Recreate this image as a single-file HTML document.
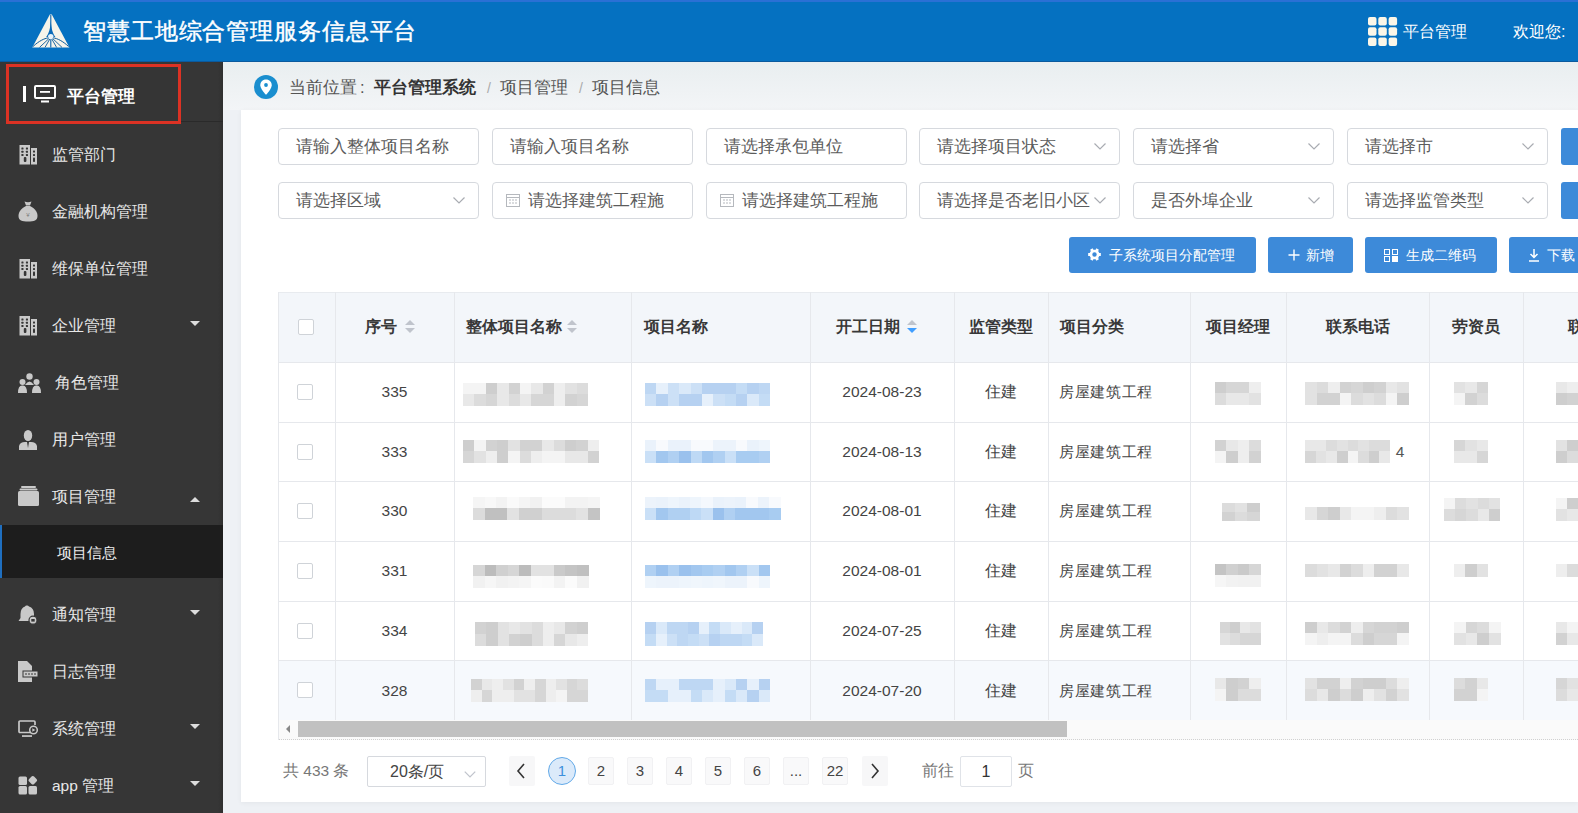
<!DOCTYPE html><html><head><meta charset="utf-8"><style>
*{box-sizing:border-box;margin:0;padding:0}
html,body{width:1578px;height:813px;overflow:hidden}
body{position:relative;background:#eef1f5;font-family:"Liberation Sans",sans-serif;color:#333}
.abs{position:absolute}
.hdr{left:0;top:0;width:1578px;height:62px;background:#0571c1;border-top:2px solid #2a70d5;border-bottom:1px solid #0b5a9e}
.title{left:83px;top:14px;font-size:23px;letter-spacing:0.88px;-webkit-text-stroke:0.45px #fff;color:#fff;line-height:34px;white-space:nowrap}
.side{left:0;top:62px;width:223px;height:751px;background:#363636}
.mi{position:absolute;left:0;width:223px;height:40px;color:#e8e8e8;font-size:15.5px;line-height:40px;white-space:nowrap}
.mi .t{position:absolute;left:52px;top:0}
.mi svg{position:absolute}
.car{position:absolute;left:189.5px;top:15px;width:0;height:0;border-left:5px solid transparent;border-right:5px solid transparent;border-top:5px solid #ddd}
.car.up{border-top:0;border-bottom:5px solid #ddd;top:20px}
.crumb{left:223px;top:62px;width:1355px;height:48px;background:linear-gradient(#e9eef0,#f3f5f7)}
.card{left:241px;top:110px;width:1337px;height:692px;background:#fff;box-shadow:0 1px 5px rgba(0,0,0,0.05)}
.inp{position:absolute;height:37px;width:201px;border:1px solid #d6d9de;border-radius:4px;background:#fff;font-size:16.5px;color:#5c5c5c;line-height:35px;padding-left:17px;white-space:nowrap;overflow:hidden}
.chev{position:absolute;right:13px;top:14px;width:12px;height:7px}
.btn{position:absolute;top:237px;height:36px;background:#3d8ad9;border-radius:3px;color:#fff;font-size:14.4px;line-height:36px;white-space:nowrap;overflow:hidden}
.th{position:absolute;top:292px;height:70px;font-size:15.5px;font-weight:bold;color:#383838;line-height:70px;white-space:nowrap}
.td{position:absolute;height:60px;font-size:15.5px;color:#444;line-height:60px;white-space:nowrap;text-align:center}
.vl{position:absolute;width:1px;background:#e6e8ec}
.hl{position:absolute;height:1px;background:#e6e8ec}
.cb{position:absolute;width:16px;height:16px;border:1px solid #cfd3d8;border-radius:2px;background:#fff}
.sort{position:absolute;width:10px;height:14px}
.sort:before{content:"";position:absolute;left:0;top:0;border-left:5px solid transparent;border-right:5px solid transparent;border-bottom:5px solid #c0c4cc}
.sort:after{content:"";position:absolute;left:0;top:8px;border-left:5px solid transparent;border-right:5px solid transparent;border-top:5px solid #c0c4cc}
.sort.desc:after{border-top-color:#409eff}
.pg{position:absolute;top:757px;height:28px;font-size:15px;line-height:28px;color:#444;text-align:center}
.mos{position:absolute}
.mos i{position:absolute;display:block}
</style></head><body>
<div class="abs hdr"></div>
<svg class="abs" style="left:30px;top:12px" width="42" height="38" viewBox="0 0 42 38">
<path d="M19.8 2.6 L2.3 35.4 L39.4 35.4 L21.8 2.6 Z" fill="#f6f4ea"/>
<path d="M20.8 3 L20.8 35.4" stroke="#0a64ad" stroke-width="1.1"/>
<path d="M20.8 9 C20.2 17 19 21 16.2 25 L25.4 25 C22.6 21 21.4 17 20.8 9 Z" fill="#0a6bb8"/>
<circle cx="20.8" cy="24.6" r="2.7" fill="#e6f2fa"/>
<path d="M3 34.5 C9 29 14 26.5 18.5 25.8 M38.6 34.5 C32.6 29 27.6 26.5 23.1 25.8" stroke="#0a5a9a" stroke-width="1" fill="none"/>
<path d="M19 26.5 L9.5 35.4 M19.8 27 L15 35.4 M21.8 27 L26.6 35.4 M22.6 26.5 L32 35.4" stroke="#0a5a9a" stroke-width="0.9" fill="none"/>
</svg>
<div class="abs title">智慧工地综合管理服务信息平台</div>
<svg class="abs" style="left:1368px;top:17px" width="30" height="30" viewBox="0 0 30 30"><rect x="0.0" y="0.0" width="8.5" height="8.5" rx="2" fill="#fbf6e8"/><rect x="10.3" y="0.0" width="8.5" height="8.5" rx="2" fill="#fbf6e8"/><rect x="20.6" y="0.0" width="8.5" height="8.5" rx="2" fill="#fbf6e8"/><rect x="0.0" y="10.3" width="8.5" height="8.5" rx="2" fill="#fbf6e8"/><rect x="10.3" y="10.3" width="8.5" height="8.5" rx="2" fill="#fbf6e8"/><rect x="20.6" y="10.3" width="8.5" height="8.5" rx="2" fill="#fbf6e8"/><rect x="0.0" y="20.6" width="8.5" height="8.5" rx="2" fill="#fbf6e8"/><rect x="10.3" y="20.6" width="8.5" height="8.5" rx="2" fill="#fbf6e8"/><rect x="20.6" y="20.6" width="8.5" height="8.5" rx="2" fill="#fbf6e8"/></svg>
<div class="abs" style="left:1403px;top:19px;font-size:15.6px;line-height:26px;color:#fff;white-space:nowrap">平台管理</div>
<div class="abs" style="left:1513px;top:19px;font-size:16px;line-height:26px;color:#fff;white-space:nowrap">欢迎您:</div>
<div class="abs side"></div>
<div class="abs" style="left:218px;top:62px;width:5px;height:751px;background:linear-gradient(90deg,rgba(0,0,0,0),rgba(0,0,0,0.12))"></div>
<div class="abs" style="left:181px;top:121px;width:42px;height:1px;background:#2a2a2a"></div>
<div class="abs" style="left:6px;top:64px;width:175px;height:60px;border:3.5px solid #dc3224;background:#353535"></div>
<div class="abs" style="left:23px;top:86px;width:2.5px;height:16px;background:#fff"></div>
<svg class="abs" style="left:34px;top:85px" width="22" height="18" viewBox="0 0 22 18"><rect x="1" y="1" width="20" height="12" rx="1" fill="none" stroke="#fff" stroke-width="2"/><rect x="6" y="6" width="10" height="1.8" fill="#fff"/><rect x="7" y="15.5" width="8" height="2" fill="#fff"/></svg>
<div class="abs" style="left:67px;top:85px;font-size:17px;font-weight:bold;color:#fff;line-height:24px;white-space:nowrap">平台管理</div>
<div class="abs" style="left:0;top:525px;width:223px;height:53px;background:#1d1d1d"></div>
<div class="abs" style="left:0;top:525px;width:2px;height:53px;background:#1f6fc0"></div>
<div class="abs" style="left:57px;top:541px;font-size:15.2px;line-height:24px;color:#eee;white-space:nowrap">项目信息</div>
<div class="mi" style="top:135px"><span class="t" style="left:52px">监管部门</span><svg class="abs" style="left:19px;top:10px" width="19" height="20" viewBox="0 0 19 20"><rect x="0.5" y="0" width="10.5" height="19.5" fill="#c9c9c9"/><rect x="12" y="3" width="6" height="16.5" fill="#c9c9c9"/><rect x="2.4" y="2.4" width="2.1" height="2.1" rx="0.5" fill="#363636"/><rect x="2.4" y="5.7" width="2.1" height="2.1" rx="0.5" fill="#363636"/><rect x="2.4" y="9" width="2.1" height="2.1" rx="0.5" fill="#363636"/><rect x="6.9" y="2.4" width="2.1" height="2.1" rx="0.5" fill="#363636"/><rect x="6.9" y="5.7" width="2.1" height="2.1" rx="0.5" fill="#363636"/><rect x="6.9" y="9" width="2.1" height="2.1" rx="0.5" fill="#363636"/><rect x="14" y="5.5" width="2" height="2" rx="0.5" fill="#363636"/><rect x="14" y="9" width="2" height="2" rx="0.5" fill="#363636"/><rect x="4.8" y="12" width="2.6" height="5" rx="1" fill="#363636"/><rect x="14" y="12.5" width="2" height="4.5" rx="0.8" fill="#363636"/></svg></div>
<div class="mi" style="top:192px"><span class="t" style="left:52px">金融机构管理</span><svg class="abs" style="left:18px;top:9px" width="20" height="21" viewBox="0 0 20 21"><path d="M6.5 0.5 Q10 2 13.5 0.5 L12 4.5 L8 4.5 Z" fill="#c9c9c9"/><path d="M8 5 L12 5 C17 7.5 19.5 11 19.5 15 C19.5 19.5 16 20.5 10 20.5 C4 20.5 0.5 19.5 0.5 15 C0.5 11 3 7.5 8 5 Z" fill="#c9c9c9"/><text x="10" y="15.5" font-size="6" fill="#777" text-anchor="middle" font-family="Liberation Sans">¥</text></svg></div>
<div class="mi" style="top:249px"><span class="t" style="left:52px">维保单位管理</span><svg class="abs" style="left:19px;top:10px" width="19" height="20" viewBox="0 0 19 20"><rect x="0.5" y="0" width="10.5" height="19.5" fill="#c9c9c9"/><rect x="12" y="3" width="6" height="16.5" fill="#c9c9c9"/><rect x="2.4" y="2.4" width="2.1" height="2.1" rx="0.5" fill="#363636"/><rect x="2.4" y="5.7" width="2.1" height="2.1" rx="0.5" fill="#363636"/><rect x="2.4" y="9" width="2.1" height="2.1" rx="0.5" fill="#363636"/><rect x="6.9" y="2.4" width="2.1" height="2.1" rx="0.5" fill="#363636"/><rect x="6.9" y="5.7" width="2.1" height="2.1" rx="0.5" fill="#363636"/><rect x="6.9" y="9" width="2.1" height="2.1" rx="0.5" fill="#363636"/><rect x="14" y="5.5" width="2" height="2" rx="0.5" fill="#363636"/><rect x="14" y="9" width="2" height="2" rx="0.5" fill="#363636"/><rect x="4.8" y="12" width="2.6" height="5" rx="1" fill="#363636"/><rect x="14" y="12.5" width="2" height="4.5" rx="0.8" fill="#363636"/></svg></div>
<div class="mi" style="top:306px"><span class="t" style="left:52px">企业管理</span><svg class="abs" style="left:19px;top:10px" width="19" height="20" viewBox="0 0 19 20"><rect x="0.5" y="0" width="10.5" height="19.5" fill="#c9c9c9"/><rect x="12" y="3" width="6" height="16.5" fill="#c9c9c9"/><rect x="2.4" y="2.4" width="2.1" height="2.1" rx="0.5" fill="#363636"/><rect x="2.4" y="5.7" width="2.1" height="2.1" rx="0.5" fill="#363636"/><rect x="2.4" y="9" width="2.1" height="2.1" rx="0.5" fill="#363636"/><rect x="6.9" y="2.4" width="2.1" height="2.1" rx="0.5" fill="#363636"/><rect x="6.9" y="5.7" width="2.1" height="2.1" rx="0.5" fill="#363636"/><rect x="6.9" y="9" width="2.1" height="2.1" rx="0.5" fill="#363636"/><rect x="14" y="5.5" width="2" height="2" rx="0.5" fill="#363636"/><rect x="14" y="9" width="2" height="2" rx="0.5" fill="#363636"/><rect x="4.8" y="12" width="2.6" height="5" rx="1" fill="#363636"/><rect x="14" y="12.5" width="2" height="4.5" rx="0.8" fill="#363636"/></svg><div class="car "></div></div>
<div class="mi" style="top:363px"><span class="t" style="left:55px">角色管理</span><svg class="abs" style="left:18px;top:9.5px" width="23" height="20" viewBox="0 0 23 20"><circle cx="11.5" cy="3.5" r="3.2" fill="#c9c9c9"/><path d="M7 12 Q11.5 5 16 12 Z" fill="#c9c9c9"/><circle cx="4.5" cy="9" r="3" fill="#c9c9c9"/><path d="M0 20 Q0 12 4.5 12.5 Q9 12 9 20 Z" fill="#c9c9c9"/><circle cx="18.5" cy="9" r="3" fill="#c9c9c9"/><path d="M14 20 Q14 12 18.5 12.5 Q23 12 23 20 Z" fill="#c9c9c9"/></svg></div>
<div class="mi" style="top:420px"><span class="t" style="left:52px">用户管理</span><svg class="abs" style="left:19px;top:10px" width="18" height="20" viewBox="0 0 18 20"><ellipse cx="9" cy="5.5" rx="4.2" ry="5.5" fill="#c9c9c9"/><path d="M0 20 L0 16 Q1 12 6 12 L12 12 Q17 12 18 16 L18 20 Z" fill="#c9c9c9"/><path d="M8 12 L9 18 L10 12 Z" fill="#363636"/></svg></div>
<div class="mi" style="top:477px"><span class="t" style="left:52px">项目管理</span><svg class="abs" style="left:18px;top:9px" width="21" height="20" viewBox="0 0 21 20"><rect x="3" y="0" width="15" height="2" rx="1" fill="#c9c9c9"/><rect x="1.5" y="2.5" width="18" height="2" rx="1" fill="#c9c9c9"/><rect x="0" y="5" width="21" height="15" rx="1.5" fill="#c9c9c9"/></svg><div class="car up"></div></div>
<div class="mi" style="top:594.5px"><span class="t" style="left:52px">通知管理</span><svg class="abs" style="left:18px;top:10px" width="20" height="20" viewBox="0 0 20 20"><path d="M8.5 0.5 Q10 0 11 1.5 Q16 3 16 9 L16 13 L18 16 L0.5 16 L2.5 13 L2.5 9 Q2.5 3 7 1.5 Q7.5 0.5 8.5 0.5 Z" fill="#c9c9c9"/><circle cx="15" cy="15.2" r="4" fill="#c9c9c9" stroke="#363636" stroke-width="1.2"/><rect x="13.3" y="14" width="3.4" height="2.6" fill="#363636"/></svg><div class="car "></div></div>
<div class="mi" style="top:651.5px"><span class="t" style="left:52px">日志管理</span><svg class="abs" style="left:18px;top:9px" width="20" height="21" viewBox="0 0 20 21"><path d="M0 0 L9 0 L14 5 L14 21 L0 21 Z" fill="#c9c9c9"/><rect x="5" y="10" width="15" height="6" fill="#c9c9c9" stroke="#363636" stroke-width="1"/><path d="M7 13 L18 13" stroke="#363636" stroke-width="1" stroke-dasharray="2 1"/></svg></div>
<div class="mi" style="top:708.5px"><span class="t" style="left:52px">系统管理</span><svg class="abs" style="left:18px;top:11px" width="21" height="18" viewBox="0 0 21 18"><path d="M13 12.5 L2 12.5 Q1 12.5 1 11.5 L1 2 Q1 1 2 1 L16 1 Q17 1 17 2 L17 5" fill="none" stroke="#c9c9c9" stroke-width="1.7"/><rect x="4" y="15.2" width="10" height="1.7" fill="#c9c9c9"/><circle cx="15.5" cy="10" r="3.8" fill="none" stroke="#c9c9c9" stroke-width="1.5"/><path d="M14.3 8.2 L17.3 10 L14.3 11.8 Z" fill="#c9c9c9"/></svg><div class="car "></div></div>
<div class="mi" style="top:765.5px"><span class="t" style="left:52px">app 管理</span><svg class="abs" style="left:18px;top:10px" width="20" height="19" viewBox="0 0 20 19"><rect x="0.5" y="0.5" width="8.5" height="8.5" rx="1.5" fill="#c9c9c9"/><rect x="0.5" y="10" width="8.5" height="8.5" rx="1.5" fill="#c9c9c9"/><rect x="10.5" y="10" width="8.5" height="8.5" rx="1.5" fill="#c9c9c9"/><rect x="11.3" y="0.8" width="7" height="7" rx="1.8" fill="#c9c9c9" transform="rotate(45 14.8 4.3)"/></svg><div class="car "></div></div>
<div class="abs crumb"></div>
<svg class="abs" style="left:254px;top:75px" width="24" height="24" viewBox="0 0 24 24"><circle cx="12" cy="12" r="12" fill="#1a8ecf"/><path d="M12 4.5 C8.4 4.5 6.3 7.2 6.3 10.2 C6.3 14 12 19.8 12 19.8 C12 19.8 17.7 14 17.7 10.2 C17.7 7.2 15.6 4.5 12 4.5 Z" fill="#fff"/><circle cx="12" cy="10" r="1.9" fill="#1a8ecf"/></svg>
<div class="abs" style="left:289px;top:74px;font-size:16.5px;line-height:26px;color:#555;white-space:nowrap">当前位置<span style="display:inline-block;width:17px;padding-left:3px">:</span><b style="color:#333">平台管理系统</b><span style="color:#aaa;padding:0 9px 0 11px;font-size:14px">/</span>项目管理<span style="color:#aaa;padding:0 9px 0 11px;font-size:14px">/</span>项目信息</div>
<div class="abs card"></div>
<div class="inp" style="left:278px;top:128px">请输入整体项目名称</div>
<div class="inp" style="left:492px;top:128px">请输入项目名称</div>
<div class="inp" style="left:706px;top:128px">请选择承包单位</div>
<div class="inp" style="left:919px;top:128px">请选择项目状态<svg class="chev" width="12" height="7" viewBox="0 0 12 7"><path d="M0.5 0.5 L6 6 L11.5 0.5" fill="none" stroke="#a9acb2" stroke-width="1.2"/></svg></div>
<div class="inp" style="left:1133px;top:128px">请选择省<svg class="chev" width="12" height="7" viewBox="0 0 12 7"><path d="M0.5 0.5 L6 6 L11.5 0.5" fill="none" stroke="#a9acb2" stroke-width="1.2"/></svg></div>
<div class="inp" style="left:1347px;top:128px">请选择市<svg class="chev" width="12" height="7" viewBox="0 0 12 7"><path d="M0.5 0.5 L6 6 L11.5 0.5" fill="none" stroke="#a9acb2" stroke-width="1.2"/></svg></div>
<div class="inp" style="left:278px;top:182px">请选择区域<svg class="chev" width="12" height="7" viewBox="0 0 12 7"><path d="M0.5 0.5 L6 6 L11.5 0.5" fill="none" stroke="#a9acb2" stroke-width="1.2"/></svg></div>
<div class="inp" style="left:492px;top:182px"><svg class="abs" style="left:13px;top:10px" width="14" height="14" viewBox="0 0 14 14"><rect x="0.5" y="1.5" width="13" height="12" fill="none" stroke="#b5b8bd" stroke-width="1"/><path d="M0.5 4.5 H13.5 M3 7 H5 M6 7 H8 M9 7 H11 M3 10 H5 M6 10 H8 M9 10 H11" stroke="#b5b8bd" stroke-width="1"/></svg><span style="position:absolute;left:35px;top:0">请选择建筑工程施</span></div>
<div class="inp" style="left:706px;top:182px"><svg class="abs" style="left:13px;top:10px" width="14" height="14" viewBox="0 0 14 14"><rect x="0.5" y="1.5" width="13" height="12" fill="none" stroke="#b5b8bd" stroke-width="1"/><path d="M0.5 4.5 H13.5 M3 7 H5 M6 7 H8 M9 7 H11 M3 10 H5 M6 10 H8 M9 10 H11" stroke="#b5b8bd" stroke-width="1"/></svg><span style="position:absolute;left:35px;top:0">请选择建筑工程施</span></div>
<div class="inp" style="left:919px;top:182px">请选择是否老旧小区<svg class="chev" width="12" height="7" viewBox="0 0 12 7"><path d="M0.5 0.5 L6 6 L11.5 0.5" fill="none" stroke="#a9acb2" stroke-width="1.2"/></svg></div>
<div class="inp" style="left:1133px;top:182px">是否外埠企业<svg class="chev" width="12" height="7" viewBox="0 0 12 7"><path d="M0.5 0.5 L6 6 L11.5 0.5" fill="none" stroke="#a9acb2" stroke-width="1.2"/></svg></div>
<div class="inp" style="left:1347px;top:182px">请选择监管类型<svg class="chev" width="12" height="7" viewBox="0 0 12 7"><path d="M0.5 0.5 L6 6 L11.5 0.5" fill="none" stroke="#a9acb2" stroke-width="1.2"/></svg></div>
<div class="abs" style="left:1561px;top:128px;width:20px;height:37px;background:#3d8ad9;border-radius:3px"></div>
<div class="abs" style="left:1561px;top:182px;width:20px;height:37px;background:#3d8ad9;border-radius:3px"></div>
<div class="btn" style="left:1069px;width:187px"><svg class="abs" style="left:19px;top:11px" width="13" height="13" viewBox="0 0 13 13"><path d="M12.83 5.04 L12.83 7.96 L11.28 7.96 L10.16 9.91 L10.93 11.25 L8.40 12.72 L7.62 11.37 L5.38 11.37 L4.60 12.72 L2.07 11.25 L2.84 9.91 L1.72 7.96 L0.17 7.96 L0.17 5.04 L1.72 5.04 L2.84 3.09 L2.07 1.75 L4.60 0.28 L5.38 1.63 L7.62 1.63 L8.40 0.28 L10.93 1.75 L10.16 3.09 L11.28 5.04 Z" fill="#fff"/><circle cx="6.5" cy="6.5" r="2.2" fill="#3d8ad9"/></svg><span style="position:absolute;left:40px">子系统项目分配管理</span></div>
<div class="btn" style="left:1268px;width:85px"><svg class="abs" style="left:20px;top:12px" width="12" height="12" viewBox="0 0 12 12"><path d="M6 0.5 V11.5 M0.5 6 H11.5" stroke="#fff" stroke-width="1.4"/></svg><span style="position:absolute;left:38px">新增</span></div>
<div class="btn" style="left:1365px;width:132px"><svg class="abs" style="left:19px;top:12px" width="14" height="13" viewBox="0 0 14 13"><rect x="0.5" y="0.5" width="5" height="5" fill="none" stroke="#fff"/><rect x="8.5" y="0.5" width="5" height="5" fill="none" stroke="#fff"/><rect x="0.5" y="7.5" width="5" height="5" fill="none" stroke="#fff"/><rect x="8" y="7" width="6" height="6" fill="#fff"/></svg><span style="position:absolute;left:41px">生成二维码</span></div>
<div class="btn" style="left:1509px;width:80px"><svg class="abs" style="left:19px;top:11px" width="12" height="14" viewBox="0 0 12 14"><path d="M6 1 V9 M2.5 6 L6 9.5 L9.5 6" fill="none" stroke="#fff" stroke-width="1.5"/><path d="M1 13 H11" stroke="#fff" stroke-width="1.5"/></svg><span style="position:absolute;left:38px">下载</span></div>
<div class="abs" style="left:278px;top:292px;width:1300px;height:70px;background:#f3f6fa"></div>
<div class="abs" style="left:278px;top:661px;width:1300px;height:59px;background:#f6f9fd"></div>
<div class="hl" style="left:278px;top:292px;width:1300px;background:#e8ebef"></div>
<div class="hl" style="left:278px;top:362px;width:1300px"></div>
<div class="hl" style="left:278px;top:422px;width:1300px"></div>
<div class="hl" style="left:278px;top:481px;width:1300px"></div>
<div class="hl" style="left:278px;top:541px;width:1300px"></div>
<div class="hl" style="left:278px;top:601px;width:1300px"></div>
<div class="hl" style="left:278px;top:660px;width:1300px"></div>
<div class="hl" style="left:278px;top:720px;width:1300px"></div>
<div class="vl" style="left:278px;top:292px;height:448px"></div>
<div class="vl" style="left:335px;top:292px;height:428px"></div>
<div class="vl" style="left:454px;top:292px;height:428px"></div>
<div class="vl" style="left:631px;top:292px;height:428px"></div>
<div class="vl" style="left:810px;top:292px;height:428px"></div>
<div class="vl" style="left:954px;top:292px;height:428px"></div>
<div class="vl" style="left:1048px;top:292px;height:428px"></div>
<div class="vl" style="left:1190px;top:292px;height:428px"></div>
<div class="vl" style="left:1286px;top:292px;height:428px"></div>
<div class="vl" style="left:1429px;top:292px;height:428px"></div>
<div class="vl" style="left:1523px;top:292px;height:428px"></div>
<div class="cb" style="left:298px;top:319px"></div>
<div class="th" style="left:365px">序号</div><i class="sort" style="left:405px;top:320px"></i>
<div class="th" style="left:466px">整体项目名称</div><i class="sort" style="left:567px;top:320px"></i>
<div class="th" style="left:644px">项目名称</div>
<div class="th" style="left:836px">开工日期</div><i class="sort desc" style="left:907px;top:320px"></i>
<div class="th" style="left:954px;width:94px;text-align:center">监管类型</div>
<div class="th" style="left:1060px">项目分类</div>
<div class="th" style="left:1190px;width:96px;text-align:center">项目经理</div>
<div class="th" style="left:1286px;width:143px;text-align:center">联系电话</div>
<div class="th" style="left:1429px;width:94px;text-align:center">劳资员</div>
<div class="th" style="left:1568px">联</div>
<div class="cb" style="left:297px;top:384px"></div>
<div class="td" style="left:335px;width:119px;top:362.0px">335</div>
<div class="td" style="left:810px;width:144px;top:362.0px">2024-08-23</div>
<div class="td" style="left:954px;width:94px;top:362.0px">住建</div>
<div class="td" style="left:1048px;width:142px;top:362.0px;text-align:left;padding-left:11px;font-size:15px;letter-spacing:0.7px">房屋建筑工程</div>
<div class="mos" style="left:463px;top:383px;width:125px;height:22px"><i style="left:0.0px;top:0.0px;width:11.9px;height:11.5px;background:rgb(244, 244, 244)"></i><i style="left:11.4px;top:0.0px;width:11.9px;height:11.5px;background:rgb(244, 244, 244)"></i><i style="left:22.7px;top:0.0px;width:11.9px;height:11.5px;background:rgb(206, 206, 206)"></i><i style="left:34.1px;top:0.0px;width:11.9px;height:11.5px;background:rgb(232, 232, 232)"></i><i style="left:45.5px;top:0.0px;width:11.9px;height:11.5px;background:rgb(210, 210, 210)"></i><i style="left:56.8px;top:0.0px;width:11.9px;height:11.5px;background:rgb(244, 244, 244)"></i><i style="left:68.2px;top:0.0px;width:11.9px;height:11.5px;background:rgb(232, 232, 232)"></i><i style="left:79.5px;top:0.0px;width:11.9px;height:11.5px;background:rgb(210, 210, 210)"></i><i style="left:90.9px;top:0.0px;width:11.9px;height:11.5px;background:rgb(238, 238, 238)"></i><i style="left:102.3px;top:0.0px;width:11.9px;height:11.5px;background:rgb(226, 226, 226)"></i><i style="left:113.6px;top:0.0px;width:11.9px;height:11.5px;background:rgb(220, 220, 220)"></i><i style="left:0.0px;top:11.0px;width:11.9px;height:11.5px;background:rgb(232, 232, 232)"></i><i style="left:11.4px;top:11.0px;width:11.9px;height:11.5px;background:rgb(220, 220, 220)"></i><i style="left:22.7px;top:11.0px;width:11.9px;height:11.5px;background:rgb(214, 214, 214)"></i><i style="left:34.1px;top:11.0px;width:11.9px;height:11.5px;background:rgb(232, 232, 232)"></i><i style="left:45.5px;top:11.0px;width:11.9px;height:11.5px;background:rgb(220, 220, 220)"></i><i style="left:56.8px;top:11.0px;width:11.9px;height:11.5px;background:rgb(232, 232, 232)"></i><i style="left:68.2px;top:11.0px;width:11.9px;height:11.5px;background:rgb(214, 214, 214)"></i><i style="left:79.5px;top:11.0px;width:11.9px;height:11.5px;background:rgb(214, 214, 214)"></i><i style="left:90.9px;top:11.0px;width:11.9px;height:11.5px;background:rgb(238, 238, 238)"></i><i style="left:102.3px;top:11.0px;width:11.9px;height:11.5px;background:rgb(210, 210, 210)"></i><i style="left:113.6px;top:11.0px;width:11.9px;height:11.5px;background:rgb(214, 214, 214)"></i></div>
<div class="mos" style="left:645px;top:383px;width:125px;height:22px"><i style="left:0.0px;top:0.0px;width:11.9px;height:11.5px;background:rgb(190, 215, 243)"></i><i style="left:11.4px;top:0.0px;width:11.9px;height:11.5px;background:rgb(230, 240, 251)"></i><i style="left:22.7px;top:0.0px;width:11.9px;height:11.5px;background:rgb(204, 224, 246)"></i><i style="left:34.1px;top:0.0px;width:11.9px;height:11.5px;background:rgb(218, 233, 249)"></i><i style="left:45.5px;top:0.0px;width:11.9px;height:11.5px;background:rgb(204, 224, 246)"></i><i style="left:56.8px;top:0.0px;width:11.9px;height:11.5px;background:rgb(182, 209, 241)"></i><i style="left:68.2px;top:0.0px;width:11.9px;height:11.5px;background:rgb(182, 209, 241)"></i><i style="left:79.5px;top:0.0px;width:11.9px;height:11.5px;background:rgb(182, 209, 241)"></i><i style="left:90.9px;top:0.0px;width:11.9px;height:11.5px;background:rgb(196, 220, 245)"></i><i style="left:102.3px;top:0.0px;width:11.9px;height:11.5px;background:rgb(182, 209, 241)"></i><i style="left:113.6px;top:0.0px;width:11.9px;height:11.5px;background:rgb(190, 215, 243)"></i><i style="left:0.0px;top:11.0px;width:11.9px;height:11.5px;background:rgb(204, 224, 246)"></i><i style="left:11.4px;top:11.0px;width:11.9px;height:11.5px;background:rgb(182, 209, 241)"></i><i style="left:22.7px;top:11.0px;width:11.9px;height:11.5px;background:rgb(204, 224, 246)"></i><i style="left:34.1px;top:11.0px;width:11.9px;height:11.5px;background:rgb(182, 209, 241)"></i><i style="left:45.5px;top:11.0px;width:11.9px;height:11.5px;background:rgb(182, 209, 241)"></i><i style="left:56.8px;top:11.0px;width:11.9px;height:11.5px;background:rgb(230, 240, 251)"></i><i style="left:68.2px;top:11.0px;width:11.9px;height:11.5px;background:rgb(204, 224, 246)"></i><i style="left:79.5px;top:11.0px;width:11.9px;height:11.5px;background:rgb(196, 220, 245)"></i><i style="left:90.9px;top:11.0px;width:11.9px;height:11.5px;background:rgb(182, 209, 241)"></i><i style="left:102.3px;top:11.0px;width:11.9px;height:11.5px;background:rgb(218, 233, 249)"></i><i style="left:113.6px;top:11.0px;width:11.9px;height:11.5px;background:rgb(196, 220, 245)"></i></div>
<div class="mos" style="left:1215px;top:382px;width:45px;height:22px"><i style="left:0.0px;top:0.0px;width:11.8px;height:11.5px;background:rgb(206, 206, 206)"></i><i style="left:11.2px;top:0.0px;width:11.8px;height:11.5px;background:rgb(214, 214, 214)"></i><i style="left:22.5px;top:0.0px;width:11.8px;height:11.5px;background:rgb(214, 214, 214)"></i><i style="left:33.8px;top:0.0px;width:11.8px;height:11.5px;background:rgb(238, 238, 238)"></i><i style="left:0.0px;top:11.0px;width:11.8px;height:11.5px;background:rgb(220, 220, 220)"></i><i style="left:11.2px;top:11.0px;width:11.8px;height:11.5px;background:rgb(232, 232, 232)"></i><i style="left:22.5px;top:11.0px;width:11.8px;height:11.5px;background:rgb(232, 232, 232)"></i><i style="left:33.8px;top:11.0px;width:11.8px;height:11.5px;background:rgb(226, 226, 226)"></i></div>
<div class="mos" style="left:1305px;top:382px;width:104px;height:22px"><i style="left:0.0px;top:0.0px;width:12.1px;height:11.5px;background:rgb(226, 226, 226)"></i><i style="left:11.6px;top:0.0px;width:12.1px;height:11.5px;background:rgb(220, 220, 220)"></i><i style="left:23.1px;top:0.0px;width:12.1px;height:11.5px;background:rgb(238, 238, 238)"></i><i style="left:34.7px;top:0.0px;width:12.1px;height:11.5px;background:rgb(210, 210, 210)"></i><i style="left:46.2px;top:0.0px;width:12.1px;height:11.5px;background:rgb(214, 214, 214)"></i><i style="left:57.8px;top:0.0px;width:12.1px;height:11.5px;background:rgb(206, 206, 206)"></i><i style="left:69.3px;top:0.0px;width:12.1px;height:11.5px;background:rgb(210, 210, 210)"></i><i style="left:80.9px;top:0.0px;width:12.1px;height:11.5px;background:rgb(232, 232, 232)"></i><i style="left:92.4px;top:0.0px;width:12.1px;height:11.5px;background:rgb(226, 226, 226)"></i><i style="left:0.0px;top:11.0px;width:12.1px;height:11.5px;background:rgb(226, 226, 226)"></i><i style="left:11.6px;top:11.0px;width:12.1px;height:11.5px;background:rgb(210, 210, 210)"></i><i style="left:23.1px;top:11.0px;width:12.1px;height:11.5px;background:rgb(210, 210, 210)"></i><i style="left:34.7px;top:11.0px;width:12.1px;height:11.5px;background:rgb(244, 244, 244)"></i><i style="left:46.2px;top:11.0px;width:12.1px;height:11.5px;background:rgb(220, 220, 220)"></i><i style="left:57.8px;top:11.0px;width:12.1px;height:11.5px;background:rgb(226, 226, 226)"></i><i style="left:69.3px;top:11.0px;width:12.1px;height:11.5px;background:rgb(220, 220, 220)"></i><i style="left:80.9px;top:11.0px;width:12.1px;height:11.5px;background:rgb(244, 244, 244)"></i><i style="left:92.4px;top:11.0px;width:12.1px;height:11.5px;background:rgb(206, 206, 206)"></i></div>
<div class="mos" style="left:1454px;top:382px;width:34px;height:22px"><i style="left:0.0px;top:0.0px;width:11.8px;height:11.5px;background:rgb(226, 226, 226)"></i><i style="left:11.3px;top:0.0px;width:11.8px;height:11.5px;background:rgb(232, 232, 232)"></i><i style="left:22.7px;top:0.0px;width:11.8px;height:11.5px;background:rgb(214, 214, 214)"></i><i style="left:0.0px;top:11.0px;width:11.8px;height:11.5px;background:rgb(244, 244, 244)"></i><i style="left:11.3px;top:11.0px;width:11.8px;height:11.5px;background:rgb(210, 210, 210)"></i><i style="left:22.7px;top:11.0px;width:11.8px;height:11.5px;background:rgb(220, 220, 220)"></i></div>
<div class="mos" style="left:1556px;top:382px;width:22px;height:22px"><i style="left:0.0px;top:0.0px;width:11.5px;height:11.5px;background:rgb(232, 232, 232)"></i><i style="left:11.0px;top:0.0px;width:11.5px;height:11.5px;background:rgb(238, 238, 238)"></i><i style="left:0.0px;top:11.0px;width:11.5px;height:11.5px;background:rgb(206, 206, 206)"></i><i style="left:11.0px;top:11.0px;width:11.5px;height:11.5px;background:rgb(210, 210, 210)"></i></div>
<div class="cb" style="left:297px;top:444px"></div>
<div class="td" style="left:335px;width:119px;top:421.7px">333</div>
<div class="td" style="left:810px;width:144px;top:421.7px">2024-08-13</div>
<div class="td" style="left:954px;width:94px;top:421.7px">住建</div>
<div class="td" style="left:1048px;width:142px;top:421.7px;text-align:left;padding-left:11px;font-size:15px;letter-spacing:0.7px">房屋建筑工程</div>
<div class="mos" style="left:463px;top:440px;width:136px;height:22px"><i style="left:0.0px;top:0.0px;width:11.8px;height:11.5px;background:rgb(206, 206, 206)"></i><i style="left:11.3px;top:0.0px;width:11.8px;height:11.5px;background:rgb(244, 244, 244)"></i><i style="left:22.7px;top:0.0px;width:11.8px;height:11.5px;background:rgb(210, 210, 210)"></i><i style="left:34.0px;top:0.0px;width:11.8px;height:11.5px;background:rgb(206, 206, 206)"></i><i style="left:45.3px;top:0.0px;width:11.8px;height:11.5px;background:rgb(226, 226, 226)"></i><i style="left:56.7px;top:0.0px;width:11.8px;height:11.5px;background:rgb(210, 210, 210)"></i><i style="left:68.0px;top:0.0px;width:11.8px;height:11.5px;background:rgb(210, 210, 210)"></i><i style="left:79.3px;top:0.0px;width:11.8px;height:11.5px;background:rgb(232, 232, 232)"></i><i style="left:90.7px;top:0.0px;width:11.8px;height:11.5px;background:rgb(220, 220, 220)"></i><i style="left:102.0px;top:0.0px;width:11.8px;height:11.5px;background:rgb(206, 206, 206)"></i><i style="left:113.3px;top:0.0px;width:11.8px;height:11.5px;background:rgb(210, 210, 210)"></i><i style="left:124.7px;top:0.0px;width:11.8px;height:11.5px;background:rgb(238, 238, 238)"></i><i style="left:0.0px;top:11.0px;width:11.8px;height:11.5px;background:rgb(214, 214, 214)"></i><i style="left:11.3px;top:11.0px;width:11.8px;height:11.5px;background:rgb(226, 226, 226)"></i><i style="left:22.7px;top:11.0px;width:11.8px;height:11.5px;background:rgb(238, 238, 238)"></i><i style="left:34.0px;top:11.0px;width:11.8px;height:11.5px;background:rgb(206, 206, 206)"></i><i style="left:45.3px;top:11.0px;width:11.8px;height:11.5px;background:rgb(244, 244, 244)"></i><i style="left:56.7px;top:11.0px;width:11.8px;height:11.5px;background:rgb(220, 220, 220)"></i><i style="left:68.0px;top:11.0px;width:11.8px;height:11.5px;background:rgb(238, 238, 238)"></i><i style="left:79.3px;top:11.0px;width:11.8px;height:11.5px;background:rgb(244, 244, 244)"></i><i style="left:90.7px;top:11.0px;width:11.8px;height:11.5px;background:rgb(244, 244, 244)"></i><i style="left:102.0px;top:11.0px;width:11.8px;height:11.5px;background:rgb(232, 232, 232)"></i><i style="left:113.3px;top:11.0px;width:11.8px;height:11.5px;background:rgb(232, 232, 232)"></i><i style="left:124.7px;top:11.0px;width:11.8px;height:11.5px;background:rgb(210, 210, 210)"></i></div>
<div class="mos" style="left:645px;top:440px;width:125px;height:22px"><i style="left:0.0px;top:0.0px;width:11.9px;height:11.5px;background:rgb(234, 242, 251)"></i><i style="left:11.4px;top:0.0px;width:11.9px;height:11.5px;background:rgb(248, 250, 253)"></i><i style="left:22.7px;top:0.0px;width:11.9px;height:11.5px;background:rgb(234, 242, 251)"></i><i style="left:34.1px;top:0.0px;width:11.9px;height:11.5px;background:rgb(234, 242, 251)"></i><i style="left:45.5px;top:0.0px;width:11.9px;height:11.5px;background:rgb(248, 250, 253)"></i><i style="left:56.8px;top:0.0px;width:11.9px;height:11.5px;background:rgb(248, 250, 253)"></i><i style="left:68.2px;top:0.0px;width:11.9px;height:11.5px;background:rgb(236, 243, 251)"></i><i style="left:79.5px;top:0.0px;width:11.9px;height:11.5px;background:rgb(236, 243, 251)"></i><i style="left:90.9px;top:0.0px;width:11.9px;height:11.5px;background:rgb(248, 250, 253)"></i><i style="left:102.3px;top:0.0px;width:11.9px;height:11.5px;background:rgb(234, 242, 251)"></i><i style="left:113.6px;top:0.0px;width:11.9px;height:11.5px;background:rgb(238, 245, 252)"></i><i style="left:0.0px;top:11.0px;width:11.9px;height:11.5px;background:rgb(202, 224, 247)"></i><i style="left:11.4px;top:11.0px;width:11.9px;height:11.5px;background:rgb(162, 199, 239)"></i><i style="left:22.7px;top:11.0px;width:11.9px;height:11.5px;background:rgb(176, 208, 242)"></i><i style="left:34.1px;top:11.0px;width:11.9px;height:11.5px;background:rgb(154, 193, 237)"></i><i style="left:45.5px;top:11.0px;width:11.9px;height:11.5px;background:rgb(190, 217, 245)"></i><i style="left:56.8px;top:11.0px;width:11.9px;height:11.5px;background:rgb(162, 199, 239)"></i><i style="left:68.2px;top:11.0px;width:11.9px;height:11.5px;background:rgb(176, 208, 242)"></i><i style="left:79.5px;top:11.0px;width:11.9px;height:11.5px;background:rgb(202, 224, 247)"></i><i style="left:90.9px;top:11.0px;width:11.9px;height:11.5px;background:rgb(168, 204, 241)"></i><i style="left:102.3px;top:11.0px;width:11.9px;height:11.5px;background:rgb(168, 204, 241)"></i><i style="left:113.6px;top:11.0px;width:11.9px;height:11.5px;background:rgb(176, 208, 242)"></i></div>
<div class="mos" style="left:1215px;top:440px;width:45px;height:22px"><i style="left:0.0px;top:0.0px;width:11.8px;height:11.5px;background:rgb(210, 210, 210)"></i><i style="left:11.2px;top:0.0px;width:11.8px;height:11.5px;background:rgb(232, 232, 232)"></i><i style="left:22.5px;top:0.0px;width:11.8px;height:11.5px;background:rgb(238, 238, 238)"></i><i style="left:33.8px;top:0.0px;width:11.8px;height:11.5px;background:rgb(220, 220, 220)"></i><i style="left:0.0px;top:11.0px;width:11.8px;height:11.5px;background:rgb(244, 244, 244)"></i><i style="left:11.2px;top:11.0px;width:11.8px;height:11.5px;background:rgb(206, 206, 206)"></i><i style="left:22.5px;top:11.0px;width:11.8px;height:11.5px;background:rgb(238, 238, 238)"></i><i style="left:33.8px;top:11.0px;width:11.8px;height:11.5px;background:rgb(210, 210, 210)"></i></div>
<div class="mos" style="left:1305px;top:440px;width:85px;height:22px"><i style="left:0.0px;top:0.0px;width:11.1px;height:11.5px;background:rgb(232, 232, 232)"></i><i style="left:10.6px;top:0.0px;width:11.1px;height:11.5px;background:rgb(232, 232, 232)"></i><i style="left:21.2px;top:0.0px;width:11.1px;height:11.5px;background:rgb(220, 220, 220)"></i><i style="left:31.9px;top:0.0px;width:11.1px;height:11.5px;background:rgb(226, 226, 226)"></i><i style="left:42.5px;top:0.0px;width:11.1px;height:11.5px;background:rgb(220, 220, 220)"></i><i style="left:53.1px;top:0.0px;width:11.1px;height:11.5px;background:rgb(226, 226, 226)"></i><i style="left:63.8px;top:0.0px;width:11.1px;height:11.5px;background:rgb(220, 220, 220)"></i><i style="left:74.4px;top:0.0px;width:11.1px;height:11.5px;background:rgb(220, 220, 220)"></i><i style="left:0.0px;top:11.0px;width:11.1px;height:11.5px;background:rgb(214, 214, 214)"></i><i style="left:10.6px;top:11.0px;width:11.1px;height:11.5px;background:rgb(226, 226, 226)"></i><i style="left:21.2px;top:11.0px;width:11.1px;height:11.5px;background:rgb(232, 232, 232)"></i><i style="left:31.9px;top:11.0px;width:11.1px;height:11.5px;background:rgb(206, 206, 206)"></i><i style="left:42.5px;top:11.0px;width:11.1px;height:11.5px;background:rgb(244, 244, 244)"></i><i style="left:53.1px;top:11.0px;width:11.1px;height:11.5px;background:rgb(220, 220, 220)"></i><i style="left:63.8px;top:11.0px;width:11.1px;height:11.5px;background:rgb(206, 206, 206)"></i><i style="left:74.4px;top:11.0px;width:11.1px;height:11.5px;background:rgb(232, 232, 232)"></i></div>
<div class="mos" style="left:1454px;top:440px;width:34px;height:22px"><i style="left:0.0px;top:0.0px;width:11.8px;height:11.5px;background:rgb(214, 214, 214)"></i><i style="left:11.3px;top:0.0px;width:11.8px;height:11.5px;background:rgb(226, 226, 226)"></i><i style="left:22.7px;top:0.0px;width:11.8px;height:11.5px;background:rgb(232, 232, 232)"></i><i style="left:0.0px;top:11.0px;width:11.8px;height:11.5px;background:rgb(232, 232, 232)"></i><i style="left:11.3px;top:11.0px;width:11.8px;height:11.5px;background:rgb(232, 232, 232)"></i><i style="left:22.7px;top:11.0px;width:11.8px;height:11.5px;background:rgb(214, 214, 214)"></i></div>
<div class="mos" style="left:1556px;top:440px;width:22px;height:22px"><i style="left:0.0px;top:0.0px;width:11.5px;height:11.5px;background:rgb(226, 226, 226)"></i><i style="left:11.0px;top:0.0px;width:11.5px;height:11.5px;background:rgb(206, 206, 206)"></i><i style="left:0.0px;top:11.0px;width:11.5px;height:11.5px;background:rgb(206, 206, 206)"></i><i style="left:11.0px;top:11.0px;width:11.5px;height:11.5px;background:rgb(220, 220, 220)"></i></div>
<div class="cb" style="left:297px;top:503px"></div>
<div class="td" style="left:335px;width:119px;top:481.4px">330</div>
<div class="td" style="left:810px;width:144px;top:481.4px">2024-08-01</div>
<div class="td" style="left:954px;width:94px;top:481.4px">住建</div>
<div class="td" style="left:1048px;width:142px;top:481.4px;text-align:left;padding-left:11px;font-size:15px;letter-spacing:0.7px">房屋建筑工程</div>
<div class="mos" style="left:473px;top:497px;width:126px;height:22px"><i style="left:0.0px;top:0.0px;width:12.0px;height:11.5px;background:rgb(245, 245, 245)"></i><i style="left:11.5px;top:0.0px;width:12.0px;height:11.5px;background:rgb(248, 248, 248)"></i><i style="left:22.9px;top:0.0px;width:12.0px;height:11.5px;background:rgb(243, 243, 243)"></i><i style="left:34.4px;top:0.0px;width:12.0px;height:11.5px;background:rgb(250, 250, 250)"></i><i style="left:45.8px;top:0.0px;width:12.0px;height:11.5px;background:rgb(245, 245, 245)"></i><i style="left:57.3px;top:0.0px;width:12.0px;height:11.5px;background:rgb(241, 241, 241)"></i><i style="left:68.7px;top:0.0px;width:12.0px;height:11.5px;background:rgb(251, 251, 251)"></i><i style="left:80.2px;top:0.0px;width:12.0px;height:11.5px;background:rgb(251, 251, 251)"></i><i style="left:91.6px;top:0.0px;width:12.0px;height:11.5px;background:rgb(243, 243, 243)"></i><i style="left:103.1px;top:0.0px;width:12.0px;height:11.5px;background:rgb(243, 243, 243)"></i><i style="left:114.5px;top:0.0px;width:12.0px;height:11.5px;background:rgb(245, 245, 245)"></i><i style="left:0.0px;top:11.0px;width:12.0px;height:11.5px;background:rgb(220, 220, 220)"></i><i style="left:11.5px;top:11.0px;width:12.0px;height:11.5px;background:rgb(192, 192, 192)"></i><i style="left:22.9px;top:11.0px;width:12.0px;height:11.5px;background:rgb(192, 192, 192)"></i><i style="left:34.4px;top:11.0px;width:12.0px;height:11.5px;background:rgb(226, 226, 226)"></i><i style="left:45.8px;top:11.0px;width:12.0px;height:11.5px;background:rgb(208, 208, 208)"></i><i style="left:57.3px;top:11.0px;width:12.0px;height:11.5px;background:rgb(208, 208, 208)"></i><i style="left:68.7px;top:11.0px;width:12.0px;height:11.5px;background:rgb(220, 220, 220)"></i><i style="left:80.2px;top:11.0px;width:12.0px;height:11.5px;background:rgb(220, 220, 220)"></i><i style="left:91.6px;top:11.0px;width:12.0px;height:11.5px;background:rgb(220, 220, 220)"></i><i style="left:103.1px;top:11.0px;width:12.0px;height:11.5px;background:rgb(226, 226, 226)"></i><i style="left:114.5px;top:11.0px;width:12.0px;height:11.5px;background:rgb(196, 196, 196)"></i></div>
<div class="mos" style="left:645px;top:497px;width:135px;height:22px"><i style="left:0.0px;top:0.0px;width:11.8px;height:11.5px;background:rgb(236, 243, 251)"></i><i style="left:11.2px;top:0.0px;width:11.8px;height:11.5px;background:rgb(234, 242, 251)"></i><i style="left:22.5px;top:0.0px;width:11.8px;height:11.5px;background:rgb(238, 245, 252)"></i><i style="left:33.8px;top:0.0px;width:11.8px;height:11.5px;background:rgb(234, 242, 251)"></i><i style="left:45.0px;top:0.0px;width:11.8px;height:11.5px;background:rgb(238, 245, 252)"></i><i style="left:56.2px;top:0.0px;width:11.8px;height:11.5px;background:rgb(244, 248, 253)"></i><i style="left:67.5px;top:0.0px;width:11.8px;height:11.5px;background:rgb(234, 242, 251)"></i><i style="left:78.8px;top:0.0px;width:11.8px;height:11.5px;background:rgb(236, 243, 251)"></i><i style="left:90.0px;top:0.0px;width:11.8px;height:11.5px;background:rgb(234, 242, 251)"></i><i style="left:101.2px;top:0.0px;width:11.8px;height:11.5px;background:rgb(248, 250, 253)"></i><i style="left:112.5px;top:0.0px;width:11.8px;height:11.5px;background:rgb(236, 243, 251)"></i><i style="left:123.8px;top:0.0px;width:11.8px;height:11.5px;background:rgb(248, 250, 253)"></i><i style="left:0.0px;top:11.0px;width:11.8px;height:11.5px;background:rgb(202, 224, 247)"></i><i style="left:11.2px;top:11.0px;width:11.8px;height:11.5px;background:rgb(162, 199, 239)"></i><i style="left:22.5px;top:11.0px;width:11.8px;height:11.5px;background:rgb(176, 208, 242)"></i><i style="left:33.8px;top:11.0px;width:11.8px;height:11.5px;background:rgb(176, 208, 242)"></i><i style="left:45.0px;top:11.0px;width:11.8px;height:11.5px;background:rgb(190, 217, 245)"></i><i style="left:56.2px;top:11.0px;width:11.8px;height:11.5px;background:rgb(202, 224, 247)"></i><i style="left:67.5px;top:11.0px;width:11.8px;height:11.5px;background:rgb(154, 193, 237)"></i><i style="left:78.8px;top:11.0px;width:11.8px;height:11.5px;background:rgb(176, 208, 242)"></i><i style="left:90.0px;top:11.0px;width:11.8px;height:11.5px;background:rgb(162, 199, 239)"></i><i style="left:101.2px;top:11.0px;width:11.8px;height:11.5px;background:rgb(162, 199, 239)"></i><i style="left:112.5px;top:11.0px;width:11.8px;height:11.5px;background:rgb(162, 199, 239)"></i><i style="left:123.8px;top:11.0px;width:11.8px;height:11.5px;background:rgb(168, 204, 241)"></i></div>
<div class="mos" style="left:1222px;top:503px;width:38px;height:17px"><i style="left:0.0px;top:0.0px;width:13.2px;height:9.0px;background:rgb(220, 220, 220)"></i><i style="left:12.7px;top:0.0px;width:13.2px;height:9.0px;background:rgb(226, 226, 226)"></i><i style="left:25.3px;top:0.0px;width:13.2px;height:9.0px;background:rgb(206, 206, 206)"></i><i style="left:0.0px;top:8.5px;width:13.2px;height:9.0px;background:rgb(210, 210, 210)"></i><i style="left:12.7px;top:8.5px;width:13.2px;height:9.0px;background:rgb(220, 220, 220)"></i><i style="left:25.3px;top:8.5px;width:13.2px;height:9.0px;background:rgb(214, 214, 214)"></i></div>
<div class="mos" style="left:1305px;top:507px;width:104px;height:12px"><i style="left:0.0px;top:0.0px;width:12.1px;height:12.5px;background:rgb(232, 232, 232)"></i><i style="left:11.6px;top:0.0px;width:12.1px;height:12.5px;background:rgb(214, 214, 214)"></i><i style="left:23.1px;top:0.0px;width:12.1px;height:12.5px;background:rgb(206, 206, 206)"></i><i style="left:34.7px;top:0.0px;width:12.1px;height:12.5px;background:rgb(232, 232, 232)"></i><i style="left:46.2px;top:0.0px;width:12.1px;height:12.5px;background:rgb(244, 244, 244)"></i><i style="left:57.8px;top:0.0px;width:12.1px;height:12.5px;background:rgb(244, 244, 244)"></i><i style="left:69.3px;top:0.0px;width:12.1px;height:12.5px;background:rgb(238, 238, 238)"></i><i style="left:80.9px;top:0.0px;width:12.1px;height:12.5px;background:rgb(220, 220, 220)"></i><i style="left:92.4px;top:0.0px;width:12.1px;height:12.5px;background:rgb(226, 226, 226)"></i></div>
<div class="mos" style="left:1444px;top:498px;width:56px;height:22px"><i style="left:0.0px;top:0.0px;width:11.7px;height:11.5px;background:rgb(244, 244, 244)"></i><i style="left:11.2px;top:0.0px;width:11.7px;height:11.5px;background:rgb(220, 220, 220)"></i><i style="left:22.4px;top:0.0px;width:11.7px;height:11.5px;background:rgb(226, 226, 226)"></i><i style="left:33.6px;top:0.0px;width:11.7px;height:11.5px;background:rgb(220, 220, 220)"></i><i style="left:44.8px;top:0.0px;width:11.7px;height:11.5px;background:rgb(226, 226, 226)"></i><i style="left:0.0px;top:11.0px;width:11.7px;height:11.5px;background:rgb(220, 220, 220)"></i><i style="left:11.2px;top:11.0px;width:11.7px;height:11.5px;background:rgb(214, 214, 214)"></i><i style="left:22.4px;top:11.0px;width:11.7px;height:11.5px;background:rgb(220, 220, 220)"></i><i style="left:33.6px;top:11.0px;width:11.7px;height:11.5px;background:rgb(232, 232, 232)"></i><i style="left:44.8px;top:11.0px;width:11.7px;height:11.5px;background:rgb(206, 206, 206)"></i></div>
<div class="mos" style="left:1556px;top:498px;width:22px;height:22px"><i style="left:0.0px;top:0.0px;width:11.5px;height:11.5px;background:rgb(244, 244, 244)"></i><i style="left:11.0px;top:0.0px;width:11.5px;height:11.5px;background:rgb(206, 206, 206)"></i><i style="left:0.0px;top:11.0px;width:11.5px;height:11.5px;background:rgb(226, 226, 226)"></i><i style="left:11.0px;top:11.0px;width:11.5px;height:11.5px;background:rgb(232, 232, 232)"></i></div>
<div class="cb" style="left:297px;top:563px"></div>
<div class="td" style="left:335px;width:119px;top:541.1px">331</div>
<div class="td" style="left:810px;width:144px;top:541.1px">2024-08-01</div>
<div class="td" style="left:954px;width:94px;top:541.1px">住建</div>
<div class="td" style="left:1048px;width:142px;top:541.1px;text-align:left;padding-left:11px;font-size:15px;letter-spacing:0.7px">房屋建筑工程</div>
<div class="mos" style="left:473px;top:565px;width:115px;height:22px"><i style="left:0.0px;top:0.0px;width:12.0px;height:11.5px;background:rgb(214, 214, 214)"></i><i style="left:11.5px;top:0.0px;width:12.0px;height:11.5px;background:rgb(188, 188, 188)"></i><i style="left:23.0px;top:0.0px;width:12.0px;height:11.5px;background:rgb(208, 208, 208)"></i><i style="left:34.5px;top:0.0px;width:12.0px;height:11.5px;background:rgb(214, 214, 214)"></i><i style="left:46.0px;top:0.0px;width:12.0px;height:11.5px;background:rgb(188, 188, 188)"></i><i style="left:57.5px;top:0.0px;width:12.0px;height:11.5px;background:rgb(226, 226, 226)"></i><i style="left:69.0px;top:0.0px;width:12.0px;height:11.5px;background:rgb(226, 226, 226)"></i><i style="left:80.5px;top:0.0px;width:12.0px;height:11.5px;background:rgb(202, 202, 202)"></i><i style="left:92.0px;top:0.0px;width:12.0px;height:11.5px;background:rgb(196, 196, 196)"></i><i style="left:103.5px;top:0.0px;width:12.0px;height:11.5px;background:rgb(192, 192, 192)"></i><i style="left:0.0px;top:11.0px;width:12.0px;height:11.5px;background:rgb(241, 241, 241)"></i><i style="left:11.5px;top:11.0px;width:12.0px;height:11.5px;background:rgb(246, 246, 246)"></i><i style="left:23.0px;top:11.0px;width:12.0px;height:11.5px;background:rgb(241, 241, 241)"></i><i style="left:34.5px;top:11.0px;width:12.0px;height:11.5px;background:rgb(243, 243, 243)"></i><i style="left:46.0px;top:11.0px;width:12.0px;height:11.5px;background:rgb(245, 245, 245)"></i><i style="left:57.5px;top:11.0px;width:12.0px;height:11.5px;background:rgb(251, 251, 251)"></i><i style="left:69.0px;top:11.0px;width:12.0px;height:11.5px;background:rgb(250, 250, 250)"></i><i style="left:80.5px;top:11.0px;width:12.0px;height:11.5px;background:rgb(243, 243, 243)"></i><i style="left:92.0px;top:11.0px;width:12.0px;height:11.5px;background:rgb(251, 251, 251)"></i><i style="left:103.5px;top:11.0px;width:12.0px;height:11.5px;background:rgb(241, 241, 241)"></i></div>
<div class="mos" style="left:645px;top:565px;width:125px;height:22px"><i style="left:0.0px;top:0.0px;width:11.9px;height:11.5px;background:rgb(176, 208, 242)"></i><i style="left:11.4px;top:0.0px;width:11.9px;height:11.5px;background:rgb(154, 193, 237)"></i><i style="left:22.7px;top:0.0px;width:11.9px;height:11.5px;background:rgb(176, 208, 242)"></i><i style="left:34.1px;top:0.0px;width:11.9px;height:11.5px;background:rgb(154, 193, 237)"></i><i style="left:45.5px;top:0.0px;width:11.9px;height:11.5px;background:rgb(162, 199, 239)"></i><i style="left:56.8px;top:0.0px;width:11.9px;height:11.5px;background:rgb(168, 204, 241)"></i><i style="left:68.2px;top:0.0px;width:11.9px;height:11.5px;background:rgb(176, 208, 242)"></i><i style="left:79.5px;top:0.0px;width:11.9px;height:11.5px;background:rgb(162, 199, 239)"></i><i style="left:90.9px;top:0.0px;width:11.9px;height:11.5px;background:rgb(176, 208, 242)"></i><i style="left:102.3px;top:0.0px;width:11.9px;height:11.5px;background:rgb(202, 224, 247)"></i><i style="left:113.6px;top:0.0px;width:11.9px;height:11.5px;background:rgb(162, 199, 239)"></i><i style="left:0.0px;top:11.0px;width:11.9px;height:11.5px;background:rgb(238, 245, 252)"></i><i style="left:11.4px;top:11.0px;width:11.9px;height:11.5px;background:rgb(236, 243, 251)"></i><i style="left:22.7px;top:11.0px;width:11.9px;height:11.5px;background:rgb(236, 243, 251)"></i><i style="left:34.1px;top:11.0px;width:11.9px;height:11.5px;background:rgb(238, 245, 252)"></i><i style="left:45.5px;top:11.0px;width:11.9px;height:11.5px;background:rgb(240, 246, 252)"></i><i style="left:56.8px;top:11.0px;width:11.9px;height:11.5px;background:rgb(238, 245, 252)"></i><i style="left:68.2px;top:11.0px;width:11.9px;height:11.5px;background:rgb(240, 246, 252)"></i><i style="left:79.5px;top:11.0px;width:11.9px;height:11.5px;background:rgb(236, 243, 251)"></i><i style="left:90.9px;top:11.0px;width:11.9px;height:11.5px;background:rgb(236, 243, 251)"></i><i style="left:102.3px;top:11.0px;width:11.9px;height:11.5px;background:rgb(248, 250, 253)"></i><i style="left:113.6px;top:11.0px;width:11.9px;height:11.5px;background:rgb(238, 245, 252)"></i></div>
<div class="mos" style="left:1215px;top:564px;width:45px;height:22px"><i style="left:0.0px;top:0.0px;width:11.8px;height:11.5px;background:rgb(196, 196, 196)"></i><i style="left:11.2px;top:0.0px;width:11.8px;height:11.5px;background:rgb(208, 208, 208)"></i><i style="left:22.5px;top:0.0px;width:11.8px;height:11.5px;background:rgb(202, 202, 202)"></i><i style="left:33.8px;top:0.0px;width:11.8px;height:11.5px;background:rgb(214, 214, 214)"></i><i style="left:0.0px;top:11.0px;width:11.8px;height:11.5px;background:rgb(246, 246, 246)"></i><i style="left:11.2px;top:11.0px;width:11.8px;height:11.5px;background:rgb(242, 242, 242)"></i><i style="left:22.5px;top:11.0px;width:11.8px;height:11.5px;background:rgb(241, 241, 241)"></i><i style="left:33.8px;top:11.0px;width:11.8px;height:11.5px;background:rgb(241, 241, 241)"></i></div>
<div class="mos" style="left:1305px;top:564px;width:104px;height:12px"><i style="left:0.0px;top:0.0px;width:12.1px;height:12.5px;background:rgb(220, 220, 220)"></i><i style="left:11.6px;top:0.0px;width:12.1px;height:12.5px;background:rgb(226, 226, 226)"></i><i style="left:23.1px;top:0.0px;width:12.1px;height:12.5px;background:rgb(232, 232, 232)"></i><i style="left:34.7px;top:0.0px;width:12.1px;height:12.5px;background:rgb(210, 210, 210)"></i><i style="left:46.2px;top:0.0px;width:12.1px;height:12.5px;background:rgb(220, 220, 220)"></i><i style="left:57.8px;top:0.0px;width:12.1px;height:12.5px;background:rgb(238, 238, 238)"></i><i style="left:69.3px;top:0.0px;width:12.1px;height:12.5px;background:rgb(210, 210, 210)"></i><i style="left:80.9px;top:0.0px;width:12.1px;height:12.5px;background:rgb(210, 210, 210)"></i><i style="left:92.4px;top:0.0px;width:12.1px;height:12.5px;background:rgb(232, 232, 232)"></i></div>
<div class="mos" style="left:1454px;top:564px;width:34px;height:12px"><i style="left:0.0px;top:0.0px;width:11.8px;height:12.5px;background:rgb(238, 238, 238)"></i><i style="left:11.3px;top:0.0px;width:11.8px;height:12.5px;background:rgb(206, 206, 206)"></i><i style="left:22.7px;top:0.0px;width:11.8px;height:12.5px;background:rgb(226, 226, 226)"></i></div>
<div class="mos" style="left:1556px;top:564px;width:22px;height:12px"><i style="left:0.0px;top:0.0px;width:11.5px;height:12.5px;background:rgb(238, 238, 238)"></i><i style="left:11.0px;top:0.0px;width:11.5px;height:12.5px;background:rgb(220, 220, 220)"></i></div>
<div class="cb" style="left:297px;top:623px"></div>
<div class="td" style="left:335px;width:119px;top:600.8px">334</div>
<div class="td" style="left:810px;width:144px;top:600.8px">2024-07-25</div>
<div class="td" style="left:954px;width:94px;top:600.8px">住建</div>
<div class="td" style="left:1048px;width:142px;top:600.8px;text-align:left;padding-left:11px;font-size:15px;letter-spacing:0.7px">房屋建筑工程</div>
<div class="mos" style="left:475px;top:622px;width:113px;height:23px"><i style="left:0.0px;top:0.0px;width:11.8px;height:12.0px;background:rgb(210, 210, 210)"></i><i style="left:11.3px;top:0.0px;width:11.8px;height:12.0px;background:rgb(206, 206, 206)"></i><i style="left:22.6px;top:0.0px;width:11.8px;height:12.0px;background:rgb(226, 226, 226)"></i><i style="left:33.9px;top:0.0px;width:11.8px;height:12.0px;background:rgb(232, 232, 232)"></i><i style="left:45.2px;top:0.0px;width:11.8px;height:12.0px;background:rgb(226, 226, 226)"></i><i style="left:56.5px;top:0.0px;width:11.8px;height:12.0px;background:rgb(220, 220, 220)"></i><i style="left:67.8px;top:0.0px;width:11.8px;height:12.0px;background:rgb(238, 238, 238)"></i><i style="left:79.1px;top:0.0px;width:11.8px;height:12.0px;background:rgb(232, 232, 232)"></i><i style="left:90.4px;top:0.0px;width:11.8px;height:12.0px;background:rgb(210, 210, 210)"></i><i style="left:101.7px;top:0.0px;width:11.8px;height:12.0px;background:rgb(206, 206, 206)"></i><i style="left:0.0px;top:11.5px;width:11.8px;height:12.0px;background:rgb(220, 220, 220)"></i><i style="left:11.3px;top:11.5px;width:11.8px;height:12.0px;background:rgb(206, 206, 206)"></i><i style="left:22.6px;top:11.5px;width:11.8px;height:12.0px;background:rgb(226, 226, 226)"></i><i style="left:33.9px;top:11.5px;width:11.8px;height:12.0px;background:rgb(210, 210, 210)"></i><i style="left:45.2px;top:11.5px;width:11.8px;height:12.0px;background:rgb(206, 206, 206)"></i><i style="left:56.5px;top:11.5px;width:11.8px;height:12.0px;background:rgb(220, 220, 220)"></i><i style="left:67.8px;top:11.5px;width:11.8px;height:12.0px;background:rgb(238, 238, 238)"></i><i style="left:79.1px;top:11.5px;width:11.8px;height:12.0px;background:rgb(214, 214, 214)"></i><i style="left:90.4px;top:11.5px;width:11.8px;height:12.0px;background:rgb(232, 232, 232)"></i><i style="left:101.7px;top:11.5px;width:11.8px;height:12.0px;background:rgb(238, 238, 238)"></i></div>
<div class="mos" style="left:645px;top:622px;width:118px;height:23px"><i style="left:0.0px;top:0.0px;width:11.2px;height:12.0px;background:rgb(182, 209, 241)"></i><i style="left:10.7px;top:0.0px;width:11.2px;height:12.0px;background:rgb(218, 233, 249)"></i><i style="left:21.5px;top:0.0px;width:11.2px;height:12.0px;background:rgb(190, 215, 243)"></i><i style="left:32.2px;top:0.0px;width:11.2px;height:12.0px;background:rgb(190, 215, 243)"></i><i style="left:42.9px;top:0.0px;width:11.2px;height:12.0px;background:rgb(182, 209, 241)"></i><i style="left:53.6px;top:0.0px;width:11.2px;height:12.0px;background:rgb(230, 240, 251)"></i><i style="left:64.4px;top:0.0px;width:11.2px;height:12.0px;background:rgb(196, 220, 245)"></i><i style="left:75.1px;top:0.0px;width:11.2px;height:12.0px;background:rgb(218, 233, 249)"></i><i style="left:85.8px;top:0.0px;width:11.2px;height:12.0px;background:rgb(230, 240, 251)"></i><i style="left:96.5px;top:0.0px;width:11.2px;height:12.0px;background:rgb(218, 233, 249)"></i><i style="left:107.3px;top:0.0px;width:11.2px;height:12.0px;background:rgb(182, 209, 241)"></i><i style="left:0.0px;top:11.5px;width:11.2px;height:12.0px;background:rgb(196, 220, 245)"></i><i style="left:10.7px;top:11.5px;width:11.2px;height:12.0px;background:rgb(230, 240, 251)"></i><i style="left:21.5px;top:11.5px;width:11.2px;height:12.0px;background:rgb(204, 224, 246)"></i><i style="left:32.2px;top:11.5px;width:11.2px;height:12.0px;background:rgb(190, 215, 243)"></i><i style="left:42.9px;top:11.5px;width:11.2px;height:12.0px;background:rgb(196, 220, 245)"></i><i style="left:53.6px;top:11.5px;width:11.2px;height:12.0px;background:rgb(204, 224, 246)"></i><i style="left:64.4px;top:11.5px;width:11.2px;height:12.0px;background:rgb(182, 209, 241)"></i><i style="left:75.1px;top:11.5px;width:11.2px;height:12.0px;background:rgb(190, 215, 243)"></i><i style="left:85.8px;top:11.5px;width:11.2px;height:12.0px;background:rgb(190, 215, 243)"></i><i style="left:96.5px;top:11.5px;width:11.2px;height:12.0px;background:rgb(196, 220, 245)"></i><i style="left:107.3px;top:11.5px;width:11.2px;height:12.0px;background:rgb(218, 233, 249)"></i></div>
<div class="mos" style="left:1220px;top:622px;width:40px;height:22px"><i style="left:0.0px;top:0.0px;width:10.5px;height:11.5px;background:rgb(214, 214, 214)"></i><i style="left:10.0px;top:0.0px;width:10.5px;height:11.5px;background:rgb(206, 206, 206)"></i><i style="left:20.0px;top:0.0px;width:10.5px;height:11.5px;background:rgb(232, 232, 232)"></i><i style="left:30.0px;top:0.0px;width:10.5px;height:11.5px;background:rgb(226, 226, 226)"></i><i style="left:0.0px;top:11.0px;width:10.5px;height:11.5px;background:rgb(226, 226, 226)"></i><i style="left:10.0px;top:11.0px;width:10.5px;height:11.5px;background:rgb(220, 220, 220)"></i><i style="left:20.0px;top:11.0px;width:10.5px;height:11.5px;background:rgb(214, 214, 214)"></i><i style="left:30.0px;top:11.0px;width:10.5px;height:11.5px;background:rgb(214, 214, 214)"></i></div>
<div class="mos" style="left:1305px;top:622px;width:104px;height:22px"><i style="left:0.0px;top:0.0px;width:12.1px;height:11.5px;background:rgb(206, 206, 206)"></i><i style="left:11.6px;top:0.0px;width:12.1px;height:11.5px;background:rgb(232, 232, 232)"></i><i style="left:23.1px;top:0.0px;width:12.1px;height:11.5px;background:rgb(220, 220, 220)"></i><i style="left:34.7px;top:0.0px;width:12.1px;height:11.5px;background:rgb(210, 210, 210)"></i><i style="left:46.2px;top:0.0px;width:12.1px;height:11.5px;background:rgb(238, 238, 238)"></i><i style="left:57.8px;top:0.0px;width:12.1px;height:11.5px;background:rgb(214, 214, 214)"></i><i style="left:69.3px;top:0.0px;width:12.1px;height:11.5px;background:rgb(210, 210, 210)"></i><i style="left:80.9px;top:0.0px;width:12.1px;height:11.5px;background:rgb(210, 210, 210)"></i><i style="left:92.4px;top:0.0px;width:12.1px;height:11.5px;background:rgb(206, 206, 206)"></i><i style="left:0.0px;top:11.0px;width:12.1px;height:11.5px;background:rgb(244, 244, 244)"></i><i style="left:11.6px;top:11.0px;width:12.1px;height:11.5px;background:rgb(238, 238, 238)"></i><i style="left:23.1px;top:11.0px;width:12.1px;height:11.5px;background:rgb(244, 244, 244)"></i><i style="left:34.7px;top:11.0px;width:12.1px;height:11.5px;background:rgb(244, 244, 244)"></i><i style="left:46.2px;top:11.0px;width:12.1px;height:11.5px;background:rgb(220, 220, 220)"></i><i style="left:57.8px;top:11.0px;width:12.1px;height:11.5px;background:rgb(206, 206, 206)"></i><i style="left:69.3px;top:11.0px;width:12.1px;height:11.5px;background:rgb(214, 214, 214)"></i><i style="left:80.9px;top:11.0px;width:12.1px;height:11.5px;background:rgb(214, 214, 214)"></i><i style="left:92.4px;top:11.0px;width:12.1px;height:11.5px;background:rgb(244, 244, 244)"></i></div>
<div class="mos" style="left:1454px;top:622px;width:46px;height:22px"><i style="left:0.0px;top:0.0px;width:12.0px;height:11.5px;background:rgb(244, 244, 244)"></i><i style="left:11.5px;top:0.0px;width:12.0px;height:11.5px;background:rgb(214, 214, 214)"></i><i style="left:23.0px;top:0.0px;width:12.0px;height:11.5px;background:rgb(220, 220, 220)"></i><i style="left:34.5px;top:0.0px;width:12.0px;height:11.5px;background:rgb(244, 244, 244)"></i><i style="left:0.0px;top:11.0px;width:12.0px;height:11.5px;background:rgb(226, 226, 226)"></i><i style="left:11.5px;top:11.0px;width:12.0px;height:11.5px;background:rgb(232, 232, 232)"></i><i style="left:23.0px;top:11.0px;width:12.0px;height:11.5px;background:rgb(206, 206, 206)"></i><i style="left:34.5px;top:11.0px;width:12.0px;height:11.5px;background:rgb(226, 226, 226)"></i></div>
<div class="mos" style="left:1556px;top:622px;width:22px;height:22px"><i style="left:0.0px;top:0.0px;width:11.5px;height:11.5px;background:rgb(232, 232, 232)"></i><i style="left:11.0px;top:0.0px;width:11.5px;height:11.5px;background:rgb(244, 244, 244)"></i><i style="left:0.0px;top:11.0px;width:11.5px;height:11.5px;background:rgb(210, 210, 210)"></i><i style="left:11.0px;top:11.0px;width:11.5px;height:11.5px;background:rgb(232, 232, 232)"></i></div>
<div class="cb" style="left:297px;top:682px"></div>
<div class="td" style="left:335px;width:119px;top:660.5px">328</div>
<div class="td" style="left:810px;width:144px;top:660.5px">2024-07-20</div>
<div class="td" style="left:954px;width:94px;top:660.5px">住建</div>
<div class="td" style="left:1048px;width:142px;top:660.5px;text-align:left;padding-left:11px;font-size:15px;letter-spacing:0.7px">房屋建筑工程</div>
<div class="mos" style="left:471px;top:679px;width:117px;height:22px"><i style="left:0.0px;top:0.0px;width:11.1px;height:11.5px;background:rgb(210, 210, 210)"></i><i style="left:10.6px;top:0.0px;width:11.1px;height:11.5px;background:rgb(232, 232, 232)"></i><i style="left:21.3px;top:0.0px;width:11.1px;height:11.5px;background:rgb(238, 238, 238)"></i><i style="left:31.9px;top:0.0px;width:11.1px;height:11.5px;background:rgb(226, 226, 226)"></i><i style="left:42.5px;top:0.0px;width:11.1px;height:11.5px;background:rgb(210, 210, 210)"></i><i style="left:53.2px;top:0.0px;width:11.1px;height:11.5px;background:rgb(238, 238, 238)"></i><i style="left:63.8px;top:0.0px;width:11.1px;height:11.5px;background:rgb(214, 214, 214)"></i><i style="left:74.5px;top:0.0px;width:11.1px;height:11.5px;background:rgb(238, 238, 238)"></i><i style="left:85.1px;top:0.0px;width:11.1px;height:11.5px;background:rgb(226, 226, 226)"></i><i style="left:95.7px;top:0.0px;width:11.1px;height:11.5px;background:rgb(214, 214, 214)"></i><i style="left:106.4px;top:0.0px;width:11.1px;height:11.5px;background:rgb(220, 220, 220)"></i><i style="left:0.0px;top:11.0px;width:11.1px;height:11.5px;background:rgb(238, 238, 238)"></i><i style="left:10.6px;top:11.0px;width:11.1px;height:11.5px;background:rgb(214, 214, 214)"></i><i style="left:21.3px;top:11.0px;width:11.1px;height:11.5px;background:rgb(238, 238, 238)"></i><i style="left:31.9px;top:11.0px;width:11.1px;height:11.5px;background:rgb(238, 238, 238)"></i><i style="left:42.5px;top:11.0px;width:11.1px;height:11.5px;background:rgb(226, 226, 226)"></i><i style="left:53.2px;top:11.0px;width:11.1px;height:11.5px;background:rgb(226, 226, 226)"></i><i style="left:63.8px;top:11.0px;width:11.1px;height:11.5px;background:rgb(214, 214, 214)"></i><i style="left:74.5px;top:11.0px;width:11.1px;height:11.5px;background:rgb(238, 238, 238)"></i><i style="left:85.1px;top:11.0px;width:11.1px;height:11.5px;background:rgb(244, 244, 244)"></i><i style="left:95.7px;top:11.0px;width:11.1px;height:11.5px;background:rgb(214, 214, 214)"></i><i style="left:106.4px;top:11.0px;width:11.1px;height:11.5px;background:rgb(214, 214, 214)"></i></div>
<div class="mos" style="left:645px;top:679px;width:125px;height:22px"><i style="left:0.0px;top:0.0px;width:11.9px;height:11.5px;background:rgb(190, 215, 243)"></i><i style="left:11.4px;top:0.0px;width:11.9px;height:11.5px;background:rgb(230, 240, 251)"></i><i style="left:22.7px;top:0.0px;width:11.9px;height:11.5px;background:rgb(230, 240, 251)"></i><i style="left:34.1px;top:0.0px;width:11.9px;height:11.5px;background:rgb(190, 215, 243)"></i><i style="left:45.5px;top:0.0px;width:11.9px;height:11.5px;background:rgb(190, 215, 243)"></i><i style="left:56.8px;top:0.0px;width:11.9px;height:11.5px;background:rgb(190, 215, 243)"></i><i style="left:68.2px;top:0.0px;width:11.9px;height:11.5px;background:rgb(230, 240, 251)"></i><i style="left:79.5px;top:0.0px;width:11.9px;height:11.5px;background:rgb(218, 233, 249)"></i><i style="left:90.9px;top:0.0px;width:11.9px;height:11.5px;background:rgb(182, 209, 241)"></i><i style="left:102.3px;top:0.0px;width:11.9px;height:11.5px;background:rgb(230, 240, 251)"></i><i style="left:113.6px;top:0.0px;width:11.9px;height:11.5px;background:rgb(182, 209, 241)"></i><i style="left:0.0px;top:11.0px;width:11.9px;height:11.5px;background:rgb(196, 220, 245)"></i><i style="left:11.4px;top:11.0px;width:11.9px;height:11.5px;background:rgb(196, 220, 245)"></i><i style="left:22.7px;top:11.0px;width:11.9px;height:11.5px;background:rgb(230, 240, 251)"></i><i style="left:34.1px;top:11.0px;width:11.9px;height:11.5px;background:rgb(230, 240, 251)"></i><i style="left:45.5px;top:11.0px;width:11.9px;height:11.5px;background:rgb(196, 220, 245)"></i><i style="left:56.8px;top:11.0px;width:11.9px;height:11.5px;background:rgb(218, 233, 249)"></i><i style="left:68.2px;top:11.0px;width:11.9px;height:11.5px;background:rgb(230, 240, 251)"></i><i style="left:79.5px;top:11.0px;width:11.9px;height:11.5px;background:rgb(196, 220, 245)"></i><i style="left:90.9px;top:11.0px;width:11.9px;height:11.5px;background:rgb(218, 233, 249)"></i><i style="left:102.3px;top:11.0px;width:11.9px;height:11.5px;background:rgb(182, 209, 241)"></i><i style="left:113.6px;top:11.0px;width:11.9px;height:11.5px;background:rgb(218, 233, 249)"></i></div>
<div class="mos" style="left:1215px;top:678px;width:45px;height:22px"><i style="left:0.0px;top:0.0px;width:11.8px;height:11.5px;background:rgb(232, 232, 232)"></i><i style="left:11.2px;top:0.0px;width:11.8px;height:11.5px;background:rgb(206, 206, 206)"></i><i style="left:22.5px;top:0.0px;width:11.8px;height:11.5px;background:rgb(210, 210, 210)"></i><i style="left:33.8px;top:0.0px;width:11.8px;height:11.5px;background:rgb(238, 238, 238)"></i><i style="left:0.0px;top:11.0px;width:11.8px;height:11.5px;background:rgb(244, 244, 244)"></i><i style="left:11.2px;top:11.0px;width:11.8px;height:11.5px;background:rgb(206, 206, 206)"></i><i style="left:22.5px;top:11.0px;width:11.8px;height:11.5px;background:rgb(220, 220, 220)"></i><i style="left:33.8px;top:11.0px;width:11.8px;height:11.5px;background:rgb(220, 220, 220)"></i></div>
<div class="mos" style="left:1305px;top:678px;width:104px;height:22px"><i style="left:0.0px;top:0.0px;width:12.1px;height:11.5px;background:rgb(226, 226, 226)"></i><i style="left:11.6px;top:0.0px;width:12.1px;height:11.5px;background:rgb(210, 210, 210)"></i><i style="left:23.1px;top:0.0px;width:12.1px;height:11.5px;background:rgb(210, 210, 210)"></i><i style="left:34.7px;top:0.0px;width:12.1px;height:11.5px;background:rgb(238, 238, 238)"></i><i style="left:46.2px;top:0.0px;width:12.1px;height:11.5px;background:rgb(210, 210, 210)"></i><i style="left:57.8px;top:0.0px;width:12.1px;height:11.5px;background:rgb(206, 206, 206)"></i><i style="left:69.3px;top:0.0px;width:12.1px;height:11.5px;background:rgb(206, 206, 206)"></i><i style="left:80.9px;top:0.0px;width:12.1px;height:11.5px;background:rgb(220, 220, 220)"></i><i style="left:92.4px;top:0.0px;width:12.1px;height:11.5px;background:rgb(238, 238, 238)"></i><i style="left:0.0px;top:11.0px;width:12.1px;height:11.5px;background:rgb(220, 220, 220)"></i><i style="left:11.6px;top:11.0px;width:12.1px;height:11.5px;background:rgb(232, 232, 232)"></i><i style="left:23.1px;top:11.0px;width:12.1px;height:11.5px;background:rgb(206, 206, 206)"></i><i style="left:34.7px;top:11.0px;width:12.1px;height:11.5px;background:rgb(220, 220, 220)"></i><i style="left:46.2px;top:11.0px;width:12.1px;height:11.5px;background:rgb(206, 206, 206)"></i><i style="left:57.8px;top:11.0px;width:12.1px;height:11.5px;background:rgb(238, 238, 238)"></i><i style="left:69.3px;top:11.0px;width:12.1px;height:11.5px;background:rgb(226, 226, 226)"></i><i style="left:80.9px;top:11.0px;width:12.1px;height:11.5px;background:rgb(210, 210, 210)"></i><i style="left:92.4px;top:11.0px;width:12.1px;height:11.5px;background:rgb(226, 226, 226)"></i></div>
<div class="mos" style="left:1454px;top:678px;width:34px;height:22px"><i style="left:0.0px;top:0.0px;width:11.8px;height:11.5px;background:rgb(220, 220, 220)"></i><i style="left:11.3px;top:0.0px;width:11.8px;height:11.5px;background:rgb(210, 210, 210)"></i><i style="left:22.7px;top:0.0px;width:11.8px;height:11.5px;background:rgb(232, 232, 232)"></i><i style="left:0.0px;top:11.0px;width:11.8px;height:11.5px;background:rgb(210, 210, 210)"></i><i style="left:11.3px;top:11.0px;width:11.8px;height:11.5px;background:rgb(210, 210, 210)"></i><i style="left:22.7px;top:11.0px;width:11.8px;height:11.5px;background:rgb(244, 244, 244)"></i></div>
<div class="mos" style="left:1556px;top:678px;width:22px;height:22px"><i style="left:0.0px;top:0.0px;width:11.5px;height:11.5px;background:rgb(214, 214, 214)"></i><i style="left:11.0px;top:0.0px;width:11.5px;height:11.5px;background:rgb(226, 226, 226)"></i><i style="left:0.0px;top:11.0px;width:11.5px;height:11.5px;background:rgb(220, 220, 220)"></i><i style="left:11.0px;top:11.0px;width:11.5px;height:11.5px;background:rgb(232, 232, 232)"></i></div>
<div class="td" style="left:1390px;width:20px;top:422px;color:#555">4</div>
<div class="abs" style="left:279px;top:720px;width:1299px;height:20px;background:#fafafa;border-bottom:1px dotted #d0d0d0"></div>
<div class="abs" style="left:298px;top:721px;width:769px;height:16px;background:#c1c1c1"></div>
<div class="abs" style="left:286px;top:725px;width:0;height:0;border-top:4px solid transparent;border-bottom:4px solid transparent;border-right:4px solid #888"></div>
<div class="abs" style="left:283px;top:759px;font-size:15.5px;line-height:24px;color:#777;white-space:nowrap">共 433 条</div>
<div class="abs" style="left:367px;top:756px;width:119px;height:31px;border:1px solid #d6d9de;border-radius:2px;font-size:16px;line-height:29px;color:#444;padding-left:22px">20条/页<svg class="chev" style="right:9px;top:14px" width="10" height="6" viewBox="0 0 10 6"><path d="M0.5 0.5 L5 5 L9.5 0.5" fill="none" stroke="#c0c4cc" stroke-width="1.1"/></svg></div>
<div class="abs" style="left:509px;top:756px;width:26px;height:30px;background:#f7f7f8;border-radius:2px"></div>
<div class="abs" style="left:862px;top:756px;width:26px;height:30px;background:#f7f7f8;border-radius:2px"></div>
<svg class="abs" style="left:516px;top:763px" width="10" height="16" viewBox="0 0 10 16"><path d="M8 1 L2 8 L8 15" fill="none" stroke="#333" stroke-width="1.6"/></svg>
<div class="abs" style="left:548px;top:757px;width:28px;height:28px;border-radius:50%;border:1.5px solid #62a9e8;background:#dbeafa;color:#3b8fdc;font-size:15px;line-height:25px;text-align:center">1</div>
<div class="pg" style="left:588px;width:26px;background:#f9f9fa;border:1px solid #f1f1f3;line-height:26px;border-radius:2px;">2</div>
<div class="pg" style="left:627px;width:26px;background:#f9f9fa;border:1px solid #f1f1f3;line-height:26px;border-radius:2px;">3</div>
<div class="pg" style="left:666px;width:26px;background:#f9f9fa;border:1px solid #f1f1f3;line-height:26px;border-radius:2px;">4</div>
<div class="pg" style="left:705px;width:26px;background:#f9f9fa;border:1px solid #f1f1f3;line-height:26px;border-radius:2px;">5</div>
<div class="pg" style="left:744px;width:26px;background:#f9f9fa;border:1px solid #f1f1f3;line-height:26px;border-radius:2px;">6</div>
<div class="pg" style="left:783px;width:26px;background:#f9f9fa;border:1px solid #f1f1f3;line-height:26px;border-radius:2px;">...</div>
<div class="pg" style="left:822px;width:26px;background:#f9f9fa;border:1px solid #f1f1f3;line-height:26px;border-radius:2px;">22</div>
<svg class="abs" style="left:870px;top:763px" width="10" height="16" viewBox="0 0 10 16"><path d="M2 1 L8 8 L2 15" fill="none" stroke="#333" stroke-width="1.6"/></svg>
<div class="abs" style="left:922px;top:759px;font-size:15.5px;line-height:24px;color:#777;white-space:nowrap">前往</div>
<div class="abs" style="left:960px;top:756px;width:52px;height:31px;border:1px solid #e0e3e8;border-radius:2px;font-size:16px;line-height:29px;color:#333;text-align:center">1</div>
<div class="abs" style="left:1018px;top:759px;font-size:15.5px;line-height:24px;color:#777;white-space:nowrap">页</div>
</body></html>
